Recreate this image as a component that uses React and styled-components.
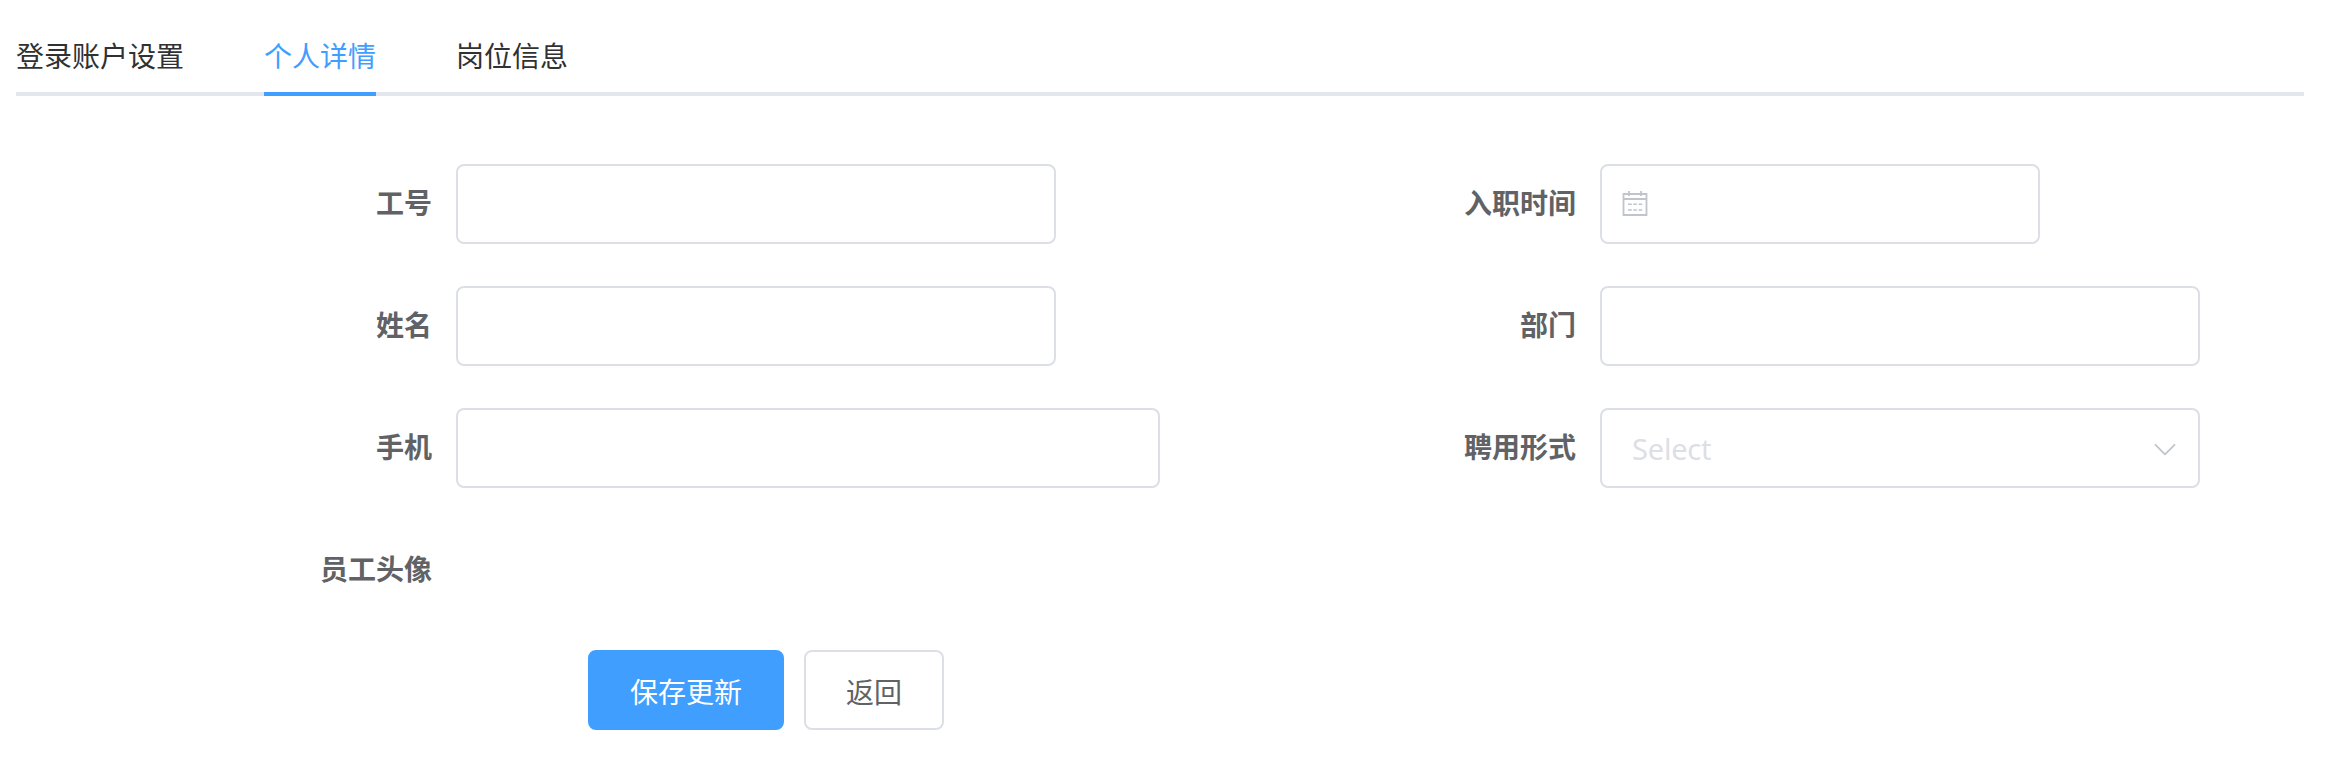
import React from "react";
import styled, { createGlobalStyle, css } from "styled-components";

const GlobalStyle = createGlobalStyle`
  *, *::before, *::after { box-sizing: border-box; }
  body {
    margin: 0;
    background: #fff;
    font-family: "Noto Sans", "Noto Sans CJK SC", sans-serif;
    font-size: 28px;
    color: #606266;
  }
`;

const Page = styled.main`
  padding: 16px 26px 29px 16px;
`;

const TabBar = styled.nav`
  display: flex;
  gap: 80px;
  height: 80px;
  border-bottom: 4px solid #e4e7ed;
`;

const Tab = styled.a`
  height: 80px;
  line-height: 78px;
  font-family: "Noto Sans CJK SC", sans-serif;
  color: ${(p) => (p.$active ? "#409eff" : "#303133")};
  border-bottom: 4px solid ${(p) => (p.$active ? "#409eff" : "transparent")};
  white-space: nowrap;
`;

const Form = styled.form`
  margin-top: 68px;
`;

const Columns = styled.div`
  display: grid;
  grid-template-columns: 1144px 1144px;
  row-gap: 42px;
`;

const Field = styled.div`
  display: flex;
  height: 80px;
`;

const Label = styled.label`
  width: 440px;
  padding-right: 24px;
  text-align: right;
  line-height: 77px;
  font-family: "Noto Sans CJK SC", sans-serif;
  font-weight: 700;
`;

const control = css`
  width: ${(p) => p.$width}px;
  height: 80px;
  border: 2px solid #dcdfe6;
  border-radius: 8px;
  background: #fff;
`;

const TextInput = styled.input`
  ${control}
  padding: 0 30px;
  font: inherit;
  color: inherit;
  outline: none;
`;

const DateBox = styled.div`
  ${control}
  display: flex;
  align-items: center;
  padding-left: 20px;
`;

const SelectBox = styled.div`
  ${control}
  display: flex;
  align-items: center;
  justify-content: space-between;
  padding: 0 21px 0 30px;
`;

const Placeholder = styled.span`
  padding-top: 1px;
  font-size: 29px;
  letter-spacing: -0.2px;
  color: #dcdfe6;
`;

const Actions = styled.div`
  display: flex;
  gap: 20px;
  margin: 40px 0 0 572px;
`;

const Button = styled.button`
  height: 80px;
  padding: 2px 40px 0;
  border: 2px solid ${(p) => (p.$primary ? "#409eff" : "#dcdfe6")};
  border-radius: 8px;
  background: ${(p) => (p.$primary ? "#409eff" : "#fff")};
  color: ${(p) => (p.$primary ? "#fff" : "#606266")};
  font-family: "Noto Sans CJK SC", sans-serif;
  font-size: 28px;
  line-height: 42px;
  display: flex;
  align-items: center;
`;

const CalendarIcon = () => (
  <svg width="28" height="28" viewBox="0 0 28 28" fill="none" stroke="#c0c4cc">
    <path
      d="M1.5 4h23v21H1.5zM1.5 9h23M7 1v5M19 1v5"
      strokeWidth="1.8"
    />
    <path
      d="M6 14.3h3.8M11.3 14.3h3.6M16.6 14.3h3.6M6 20h3.8M11.3 20h3.6M16.6 20h3.6"
      strokeWidth="1.6"
    />
  </svg>
);

const ChevronIcon = () => (
  <svg width="24" height="24" viewBox="0 0 24 24" fill="none" stroke="#c0c4cc">
    <path
      d="M2.5 8.8L12 18.4l9.5-9.6"
      strokeWidth="1.8"
      strokeLinecap="round"
      strokeLinejoin="round"
    />
  </svg>
);

export default function App() {
  return (
    <>
      <GlobalStyle />
      <Page>
        <TabBar>
          <Tab>登录账户设置</Tab>
          <Tab $active>个人详情</Tab>
          <Tab>岗位信息</Tab>
        </TabBar>
        <Form onSubmit={(e) => e.preventDefault()}>
          <Columns>
            <Field>
              <Label>工号</Label>
              <TextInput $width={600} />
            </Field>
            <Field>
              <Label>入职时间</Label>
              <DateBox $width={440}>
                <CalendarIcon />
              </DateBox>
            </Field>
            <Field>
              <Label>姓名</Label>
              <TextInput $width={600} />
            </Field>
            <Field>
              <Label>部门</Label>
              <TextInput $width={600} />
            </Field>
            <Field>
              <Label>手机</Label>
              <TextInput $width={704} />
            </Field>
            <Field>
              <Label>聘用形式</Label>
              <SelectBox $width={600}>
                <Placeholder>Select</Placeholder>
                <ChevronIcon />
              </SelectBox>
            </Field>
            <Field>
              <Label>员工头像</Label>
            </Field>
          </Columns>
          <Actions>
            <Button type="submit" $primary>
              保存更新
            </Button>
            <Button type="button">返回</Button>
          </Actions>
        </Form>
      </Page>
    </>
  );
}
